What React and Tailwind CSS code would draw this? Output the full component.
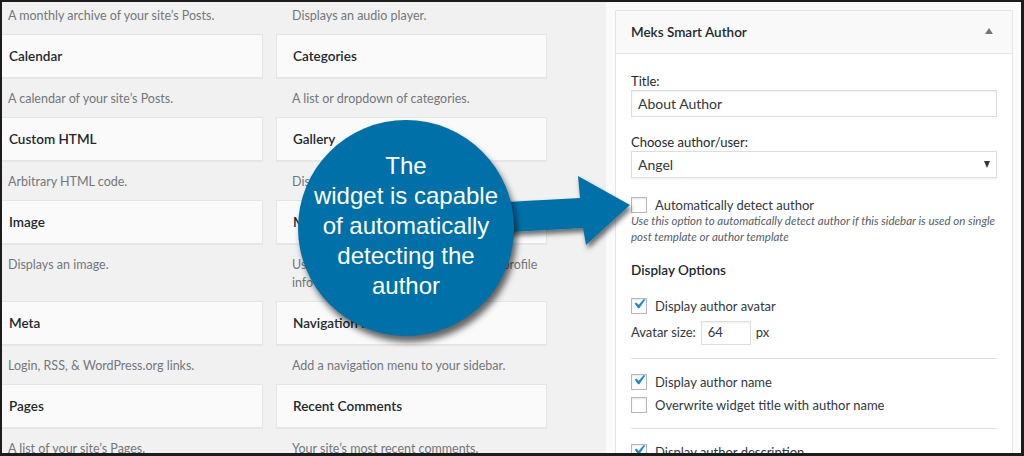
import React from 'react';

const widgets = [
  [null, 'A monthly archive of your site’s Posts.', null, 'Displays an audio player.'],
  ['Calendar', 'A calendar of your site’s Posts.', 'Categories', 'A list or dropdown of categories.'],
  ['Custom HTML', 'Arbitrary HTML code.', 'Gallery', 'Displays an image gallery.'],
  ['Image', 'Displays an image.', 'Meks Smart Author', 'Use this widget to display author/user profile info'],
  ['Meta', 'Login, RSS, & WordPress.org links.', 'Navigation Menu', 'Add a navigation menu to your sidebar.'],
  ['Pages', 'A list of your site’s Pages.', 'Recent Comments', 'Your site’s most recent comments.'],
];

function WidgetCell({ title, desc, first }) {
  return (
    <div className="flex flex-col">
      {title && (
        <div className="h-[44px] flex items-center px-4 bg-[#fafafa] border border-[#e5e5e5] shadow-[0_1px_1px_rgba(0,0,0,0.04)] text-[13.5px] font-semibold text-[#23282d]">
          {title}
        </div>
      )}
      <p className={`${first ? 'mt-[5px]' : 'mt-[12px]'} mb-[9px] pl-4 pr-[6px] text-[12.5px] leading-[18px] text-[#72777c]`}>
        {desc}
      </p>
    </div>
  );
}

function Checkbox({ checked }) {
  return (
    <span className="relative w-4 h-4 shrink-0 border border-[#b4b9be] bg-white shadow-[inset_0_1px_2px_rgba(0,0,0,0.1)]">
      {checked && (
        <svg width="20" height="20" viewBox="0 0 20 20" className="absolute -left-[3px] -top-[5px]">
          <path d="M14.83 4.89l1.34.94-5.81 8.38H9.02L5.78 9.67l1.34-1.25 2.57 2.4z" fill="#1e8cbe" />
        </svg>
      )}
    </span>
  );
}

function CheckRow({ checked, label, className = '' }) {
  return (
    <label className={`flex items-center gap-2 h-4 leading-[16px] text-[13px] text-[#32373c] ${className}`}>
      <Checkbox checked={checked} />
      <span>{label}</span>
    </label>
  );
}

export default function App() {
  return (
    <div className="relative w-[1024px] h-[456px] overflow-hidden flex border-t-2 border-l-2 border-r-[3px] border-b-[3px] border-[#1c1c1c] font-['Lato',sans-serif]">
      {/* available widgets */}
      <div className="w-[604px] shrink-0 bg-[#f1f1f1] overflow-hidden">
        <div className="grid grid-cols-[271px_271px] gap-x-[13px] -ml-[10px]">
          {widgets.map((row, i) => (
            <React.Fragment key={i}>
              <WidgetCell title={row[0]} desc={row[1]} first={i === 0} />
              <WidgetCell title={row[2]} desc={row[3]} first={i === 0} />
            </React.Fragment>
          ))}
        </div>
      </div>

      {/* sidebar */}
      <div className="flex-1 bg-[#fbfbfb] pt-2 pl-[9px] pr-2 overflow-hidden">
        <div className="border border-[#e5e5e5] bg-white shadow-[0_1px_1px_rgba(0,0,0,0.04)]">
          <div className="h-[43px] flex items-center justify-between pl-[15px] pr-[19px] bg-[#f9f9f9] border-b border-[#e5e5e5]">
            <span className="text-[13.5px] font-semibold text-[#23282d]">Meks Smart Author</span>
            <span className="w-0 h-0 border-l-[4px] border-r-[4px] border-b-[6px] border-l-transparent border-r-transparent border-b-[#72777c] -mt-[2px]" />
          </div>
          <div className="px-[15px] pt-[18px] pb-4 text-[13px] text-[#23282d]">
            <div className="leading-[18px]">Title:</div>
            <div className="h-[27px] border border-[#ddd] shadow-[inset_0_1px_2px_rgba(0,0,0,0.07)] px-[6px] flex items-center text-[14px] text-[#32373c]">
              About Author
            </div>
            <div className="mt-[16px] leading-[18px]">Choose author/user:</div>
            <div className="h-[27px] border border-[#ddd] shadow-[0_1px_2px_rgba(0,0,0,0.07)] pl-[6px] pr-[6px] flex items-center justify-between text-[14px] text-[#32373c]">
              <span>Angel</span>
              <span className="w-0 h-0 border-l-[3.5px] border-r-[3.5px] border-t-[7px] border-l-transparent border-r-transparent border-t-[#32373c]" />
            </div>
            <CheckRow className="mt-[19px]" label="Automatically detect author" />
            <p className="mt-0 text-[11.5px] italic leading-[16px] text-[#555d66]">
              Use this option to automatically detect author if this sidebar is used on single post template or author template
            </p>
            <div className="mt-[15px] text-[13.5px] font-semibold leading-[20px]">Display Options</div>
            <CheckRow checked className="mt-[18px]" label="Display author avatar" />
            <div className="mt-[7px] h-[24px] flex items-center gap-[5px] text-[13px] text-[#32373c]">
              <span>Avatar size:</span>
              <div className="w-[50px] h-[24px] border border-[#ddd] shadow-[inset_0_1px_2px_rgba(0,0,0,0.07)] px-[6px] flex items-center">64</div>
              <span>px</span>
            </div>
            <div className="mt-[13px] border-t border-[#dddddd]" />
            <CheckRow checked className="mt-[15px]" label="Display author name" />
            <CheckRow className="mt-[7px]" label="Overwrite widget title with author name" />
            <div className="mt-[15px] border-t border-[#dddddd]" />
            <CheckRow checked className="mt-[15px]" label="Display author description" />
          </div>
        </div>
      </div>

      {/* callout arrow */}
      <svg className="absolute left-0 top-0 pointer-events-none" width="1024" height="456" viewBox="0 0 1024 456">
        <defs>
          <filter id="sh" x="-20%" y="-20%" width="140%" height="160%">
            <feDropShadow dx="2" dy="4" stdDeviation="2.5" floodColor="#000" floodOpacity="0.55" />
          </filter>
        </defs>
        <polygon
          points="470,202 578,196 576,174 628,203 584,243 581,226 470,232"
          fill="#0071a8"
          filter="url(#sh)"
        />
      </svg>

      {/* callout bubble */}
      <div className="absolute left-[296px] top-[118px] w-[216px] h-[216px] rounded-full bg-[#0071a8] shadow-[3px_6px_6px_rgba(0,0,0,0.6)] flex flex-col items-center justify-center text-center text-white text-[24px] leading-[30px] font-['Liberation_Sans',Arial,sans-serif] pb-[4px]">
        <span>The</span>
        <span>widget is capable</span>
        <span>of automatically</span>
        <span>detecting the</span>
        <span>author</span>
      </div>
    </div>
  );
}
